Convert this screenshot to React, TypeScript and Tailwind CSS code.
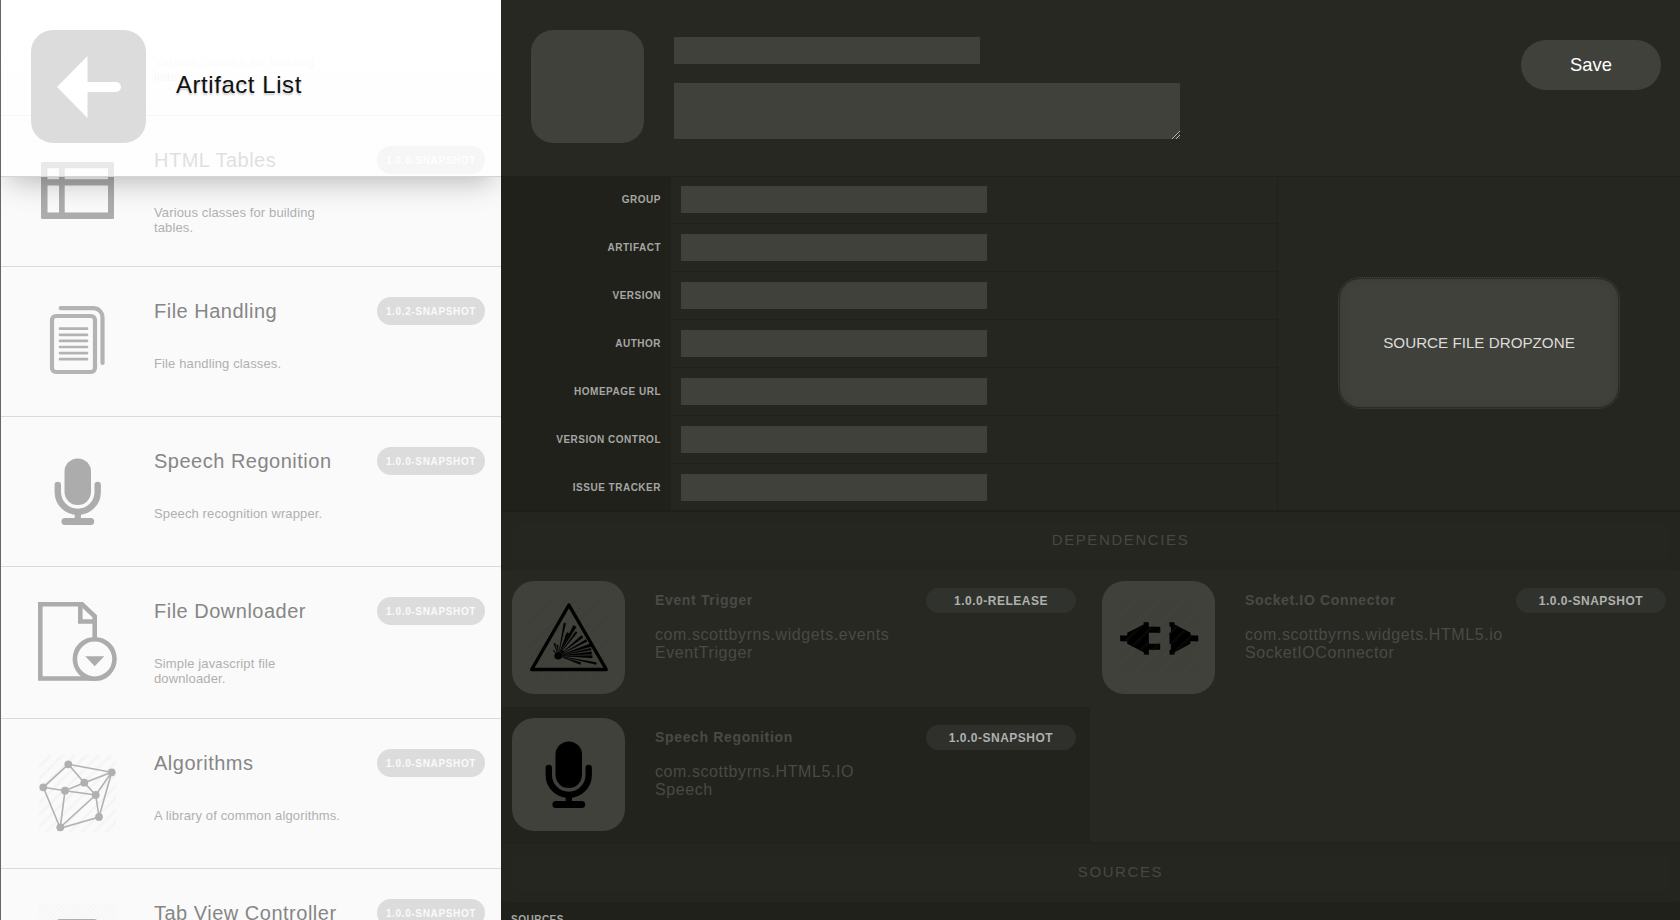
import type { ReactNode } from 'react';

const INPUT = 'bg-[#41413c]';

function Stripes({ id, color, size = 8.5 }: { id: string; color: string; size?: number }) {
  return (
    <pattern id={id} width={size} height={size} patternUnits="userSpaceOnUse" patternTransform="rotate(45)">
      <rect width={size * 0.3} height={size} fill={color} />
    </pattern>
  );
}

function TableIcon() {
  return (
    <svg width="80" height="80" viewBox="0 0 80 80" className="block">
      <path fill="#acacac" fillRule="evenodd" d="M4.500 11h70a1.500 1.500 0 0 1 1.500 1.500v54a1.500 1.500 0 0 1-1.500 1.500h-70a1.500 1.500 0 0 1-1.500-1.500v-54a1.500 1.500 0 0 1 1.500-1.500zM9.500 17.200v11h11.500v-11zM26.700 17.200v11h43.300v-11zM9.500 34.600v26.800h11.500v-26.800zM26.700 34.600v26.800h43.300v-26.800z" />
    </svg>
  );
}

function FilesIcon() {
  return (
    <svg width="80" height="80" viewBox="0 0 80 80" className="block" fill="none" stroke="#b3b3b3" strokeLinecap="round">
      <rect x="14" y="14" width="43" height="56" rx="4" strokeWidth="4.200" />
      <path d="M22.700 6.200h32.300c5.500 0 9.500 4 9.500 9.500v45.300" strokeWidth="4.200" />
      <path d="M22 26.700h27M22 32.800h27M22 38.900h27M22 45h27M22 51.100h27M22 57.200h27" strokeWidth="2.700" />
    </svg>
  );
}

function MicIcon({ color }: { color: string }) {
  return (
    <svg width="80" height="80" viewBox="0 0 80 80" className="block" fill={color}>
      <rect x="26.500" y="6.500" width="26.500" height="46.500" rx="13.200" />
      <path d="M19.800 33v7a19.950 19.950 0 0 0 39.900 0v-7" fill="none" stroke={color} strokeWidth="6.400" strokeLinecap="round" />
      <rect x="36.700" y="59" width="6.200" height="10" />
      <rect x="23.400" y="65.900" width="32.800" height="7" rx="3.500" />
    </svg>
  );
}

function DownloadIcon() {
  return (
    <svg width="80" height="80" viewBox="0 0 80 80" className="block" fill="none" stroke="#acacac" strokeWidth="4.600">
      <path d="M56.700 36V14.200L44 2.300H2.300v74.200H57" />
      <path d="M42.300 2v17.500H58" />
      <circle cx="56.700" cy="57" r="19.800" fill="#fafafa" />
      <path d="M47.300 54.300h19L56.700 64.200z" fill="#acacac" stroke="none" />
    </svg>
  );
}

function GraphIcon() {
  const nodes = [[30.3, 10.3], [73.7, 18.3], [5.3, 33.3], [46.3, 28.7], [27, 36.7], [57.7, 41], [61, 63], [22.3, 73.3]];
  return (
    <svg width="80" height="80" viewBox="0 0 80 80" className="block">
      <defs><Stripes id="graph-stripes" color="#f4f4f4" /></defs>
      <rect x="1" y="1" width="77" height="77" fill="url(#graph-stripes)" />
      <path fill="none" stroke="#b2b2b2" strokeWidth="1.600" d="M30.300 10.300 73.700 18.300 61 63 22.300 74.300 5.300 33.300zM30.300 10.300 46.300 28.700 73.700 18.300 57.700 41 46.300 28.700 27 36.700 5.300 33.300M27 36.700 57.700 41 61 63M27 36.700 22.300 73.300 57.700 41" />
      {nodes.map(([x, y]) => <circle key={x} cx={x} cy={y} r="3.900" fill="#b0b0b0" />)}
    </svg>
  );
}

function TabsIcon() {
  return (
    <svg width="80" height="80" viewBox="0 0 80 80" className="block">
      <defs><Stripes id="tab-stripes" color="#f5f5f5" size={3} /></defs>
      <rect width="78" height="78" fill="url(#tab-stripes)" />
      <rect x="19" y="17" width="40" height="46" rx="3" fill="none" stroke="#b0b0b0" strokeWidth="4" />
    </svg>
  );
}

const blastRays: [number, number, number][] = [
  [25.5, 45.5, 1.4], [28.5, 47, 1.2], [35.8, 25.2, 1.8], [39, 35, 2.2], [45.8, 28.2, 3.2], [47.5, 34, 2], [53.2, 38.5, 2.6], [57.5, 42.5, 2],
  [62.8, 46.8, 3.2], [62, 51.2, 1.8], [62.5, 55, 2.6], [63.2, 58.8, 2.4], [67.2, 65.5, 1.8], [51.5, 65.5, 2], [24.5, 52.5, 1.2],
];

function BlastIcon() {
  const cx = 29.2;
  const cy = 57.8;
  return (
    <svg width="80" height="80" viewBox="0 0 80 80" className="block">
      <defs><Stripes id="blast-stripes" color="#3f3f3a" /></defs>
      <rect width="80" height="80" fill="url(#blast-stripes)" />
      <path d="M39.900 7 77.300 71.500H2.700z" fill="none" stroke="#000" strokeWidth="3.400" strokeLinejoin="round" />
      <circle cx={cx} cy={cy} r="3.800" />
      {blastRays.map(([x, y, w]) => {
        const len = Math.hypot(x - cx, y - cy);
        const nx = (-(y - cy) / len) * (w / 2);
        const ny = ((x - cx) / len) * (w / 2);
        const sx = cx + ((x - cx) / len) * 4;
        const sy = cy + ((y - cy) / len) * 4;
        return <polygon key={`${x}-${y}`} points={`${sx},${sy} ${x + nx},${y + ny} ${x - nx},${y - ny}`} stroke="#000" strokeWidth="0.4" />;
      })}
      <circle cx="33.500" cy="54" r="1.300" />
      <circle cx="37" cy="38.500" r="1" />
    </svg>
  );
}

function PlugIcon() {
  return (
    <svg width="80" height="80" viewBox="0 0 80 80" className="block">
      <defs>
        <Stripes id="plug-stripes" color="#3f3f3a" />
        <Stripes id="plug-sheen" color="#080807" />
      </defs>
      <rect x="1" y="1" width="78" height="78" fill="url(#plug-stripes)" />
      {['#000', 'url(#plug-sheen)'].map((fill) => (
        <g key={fill} fill={fill}>
          <path d="M1.200 37.500h7v-2.700l16.600-8.300v-2.300h5v4.600h11.400v6H29.800v11h11.400v6H29.800v4.700h-5v-2.300L8.200 45.800v-2.600h-7z" />
          <path d="M79.200 37.500h-7.700v-2.700l-16-8.300v-2.300h-5v4.600h1.400v6h-1.400v11h1.400v6h-1.400v4.700h5v-2.300l16-8.400v-2.600h7.700z" />
        </g>
      ))}
    </svg>
  );
}

const artifacts = [
  { name: 'HTML Tables', version: '1.0.0-SNAPSHOT', text: ['Various classes for building', 'tables.'], icon: <TableIcon />, height: 'h-[151px]' },
  { name: 'File Handling', version: '1.0.2-SNAPSHOT', text: ['File handling classes.'], icon: <FilesIcon />, height: 'h-[150px]' },
  { name: 'Speech Regonition', version: '1.0.0-SNAPSHOT', text: ['Speech recognition wrapper.'], icon: <MicIcon color="#acacac" />, height: 'h-[150px]' },
  { name: 'File Downloader', version: '1.0.0-SNAPSHOT', text: ['Simple javascript file', 'downloader.'], icon: <DownloadIcon />, height: 'h-[152px]' },
  { name: 'Algorithms', version: '1.0.0-SNAPSHOT', text: ['A library of common algorithms.'], icon: <GraphIcon />, height: 'h-[150px]' },
  { name: 'Tab View Controller', version: '1.0.0-SNAPSHOT', text: [], icon: <TabsIcon />, height: 'h-[150px]' },
];

const fields = ['GROUP', 'ARTIFACT', 'VERSION', 'AUTHOR', 'HOMEPAGE URL', 'VERSION CONTROL', 'ISSUE TRACKER'];

function Sidebar() {
  return (
    <aside className="relative h-full w-[501px] shrink-0 overflow-hidden border-l border-[#666] bg-[#fafafa]">
      <div className="flex h-[116px] flex-col border-b border-[#dadada] pl-[153px] pt-[54px] text-[13px] leading-[15px] tracking-[0.13px] text-[#b4b4b4]">
        <p>Various classes for building</p>
        <p>lists.</p>
      </div>
      {artifacts.map((a) => (
        <div key={a.name} className={`flex items-start border-b border-[#dadada] pl-[37px] ${a.height}`}>
          <div className="mt-[35px] w-[116px] shrink-0">{a.icon}</div>
          <div className="w-[223px] shrink-0 pt-[32px]">
            <h2 className="whitespace-nowrap text-[20px] leading-6 tracking-[0.5px] text-[#868686]">{a.name}</h2>
            <div className="mt-[33px] text-[13px] leading-[15px] tracking-[0.13px] text-[#b0b0b0]">
              {a.text.map((t) => <p key={t}>{t}</p>)}
            </div>
          </div>
          <span className="mt-[30px] flex h-7 w-[108px] items-center justify-center rounded-full bg-[#dcdcdc] text-[10px] font-bold tracking-[0.65px] text-[#fafafa]">{a.version}</span>
        </div>
      ))}
      <header className="absolute inset-x-0 top-0 flex h-[177px] items-start border-b border-[#d4d4d4] bg-linear-to-b from-white/98 from-30% to-white/74 to-70% pl-[30px] pt-[30px] shadow-[0_12px_28px_-8px_rgba(0,0,0,0.28)]">
        <div className="flex h-[113px] w-[115px] items-center justify-center rounded-[22px] bg-[#dcdcdc]">
          <svg width="66" height="62" viewBox="0 0 66 62" fill="#fff">
            <path d="M1 31 31.500 0v26H60a5 5 0 0 1 0 10H31.500v26z" />
          </svg>
        </div>
        <h1 className="ml-[30px] mt-[41px] text-[24px] leading-7 tracking-[0.55px] text-[#111] [text-shadow:0_2px_2px_rgba(0,0,0,0.2)]">Artifact List</h1>
      </header>
    </aside>
  );
}

function SectionTitle({ children, height }: { children: string; height: string }) {
  return (
    <div className={`flex shrink-0 items-center justify-center bg-[#252620] pb-px pl-[60px] text-[15px] tracking-[1.6px] text-[#484843] shadow-[inset_0_0_16px_rgba(0,0,0,0.05)] ${height}`}>
      {children}
    </div>
  );
}

function Dependency({ name, group, id, version, icon, cell, badge }: { name: string; group: string; id: string; version: string; icon: ReactNode; cell: string; badge: string }) {
  return (
    <article className={`flex items-start pl-[11px] pt-[11px] ${cell}`}>
      <div className="flex size-[113px] shrink-0 items-center justify-center rounded-[22px] bg-[#41413c]">{icon}</div>
      <div className="ml-[30px] w-[271px] shrink-0 pt-[10px] text-[#4a4a46]">
        <h3 className="text-[14px] font-bold leading-[18px] tracking-[0.65px]">{name}</h3>
        <p className="mt-[17px] whitespace-nowrap text-[16px] leading-[18px] tracking-[0.57px]">{group}<br />{id}</p>
      </div>
      <span className={`mt-[7px] flex h-[25px] w-[150px] items-center justify-center rounded-full text-[12px] font-bold tracking-[0.5px] text-[#b0b0ae] ${badge}`}>{version}</span>
    </article>
  );
}

export default function App() {
  return (
    <div className="flex h-[920px] w-[1680px] overflow-hidden bg-[#272822] font-['Liberation_Sans',Arial,sans-serif]">
      <Sidebar />
      <main className="flex h-full min-w-0 flex-1 flex-col">
        <header className="flex h-[177px] shrink-0 items-start border-b border-[#1f201b] pl-[30px] pr-[19px] pt-[30px]">
          <div className="size-[113px] rounded-[22px] bg-[#41413c]" />
          <div className="ml-[30px] flex flex-col gap-[19px] pt-[7px]">
            <div className={`h-[27px] w-[306px] ${INPUT}`} />
            <div className={`flex h-14 w-[506px] items-end justify-end ${INPUT}`}>
              <svg width="8" height="8" viewBox="0 0 8 8" className="block"><path d="M0 8 8 0M4 8 8 4" stroke="#c8c8c8" strokeWidth="0.900" /><path d="M1 8 8 1M5 8 8 5" stroke="#111" strokeWidth="0.600" /></svg>
            </div>
          </div>
          <button className="ml-auto mt-[10px] h-[50px] w-[140px] rounded-full bg-[#41413c] text-[18.400px] text-white">Save</button>
        </header>

        <section className="flex h-[335px] shrink-0 border-b-2 border-[#1e1f1a] bg-[#252620]">
          <div className="w-[777px] overflow-hidden border-r border-[#20211c]">
            {fields.map((f) => (
              <div key={f} className="flex h-12 items-stretch">
                <label className="flex w-[170px] items-start justify-end bg-[#20211b] pr-[10px] pt-[15px] text-[10px] font-bold leading-[15px] tracking-[0.5px] text-[#a6a6a4]">{f}</label>
                <div className="flex-1 pl-[10px] pt-[9px]">
                  <div className={`h-[27px] w-[306px] ${INPUT}`} />
                  <div className="-ml-[10px] mt-[10px] h-px bg-[#20211c]" />
                </div>
              </div>
            ))}
          </div>
          <div className="flex flex-1 items-start justify-center pt-[100px]">
            <div className="h-[132px] w-[282px] rounded-[22px] border border-dotted border-[#44443f] bg-[#2a2a27] p-px">
              <div className="flex h-full items-center justify-center rounded-[20px] bg-[#41413c] text-[15.200px] text-[#dcdcda] shadow-[inset_0_0_10px_rgba(0,0,0,0.08)]">SOURCE FILE DROPZONE</div>
            </div>
          </div>
        </section>

        <SectionTitle height="h-[58px]">DEPENDENCIES</SectionTitle>
        <section className="grid h-[272px] shrink-0 grid-cols-[589px_590px] grid-rows-[137px_135px]">
          <Dependency name="Event Trigger" group="com.scottbyrns.widgets.events" id="EventTrigger" version="1.0.0-RELEASE" icon={<BlastIcon />} cell="bg-[#272822]" badge="bg-[#30332d]" />
          <Dependency name="Socket.IO Connector" group="com.scottbyrns.widgets.HTML5.io" id="SocketIOConnector" version="1.0.0-SNAPSHOT" icon={<PlugIcon />} cell="border-l border-[#252620] bg-[#272822]" badge="bg-[#30332d]" />
          <Dependency name="Speech Regonition" group="com.scottbyrns.HTML5.IO" id="Speech" version="1.0.0-SNAPSHOT" icon={<MicIcon color="#000" />} cell="bg-[#22231d]" badge="bg-[#2f2f2c]" />
        </section>
        <SectionTitle height="h-[60px] border-t border-[#20211c]">SOURCES</SectionTitle>
        <section className="flex-1 bg-[#20211b] pl-[10px] pt-[10px] text-[10px] font-bold leading-[15px] tracking-[0.5px] text-[#a6a6a4]">SOURCES</section>
      </main>
    </div>
  );
}
